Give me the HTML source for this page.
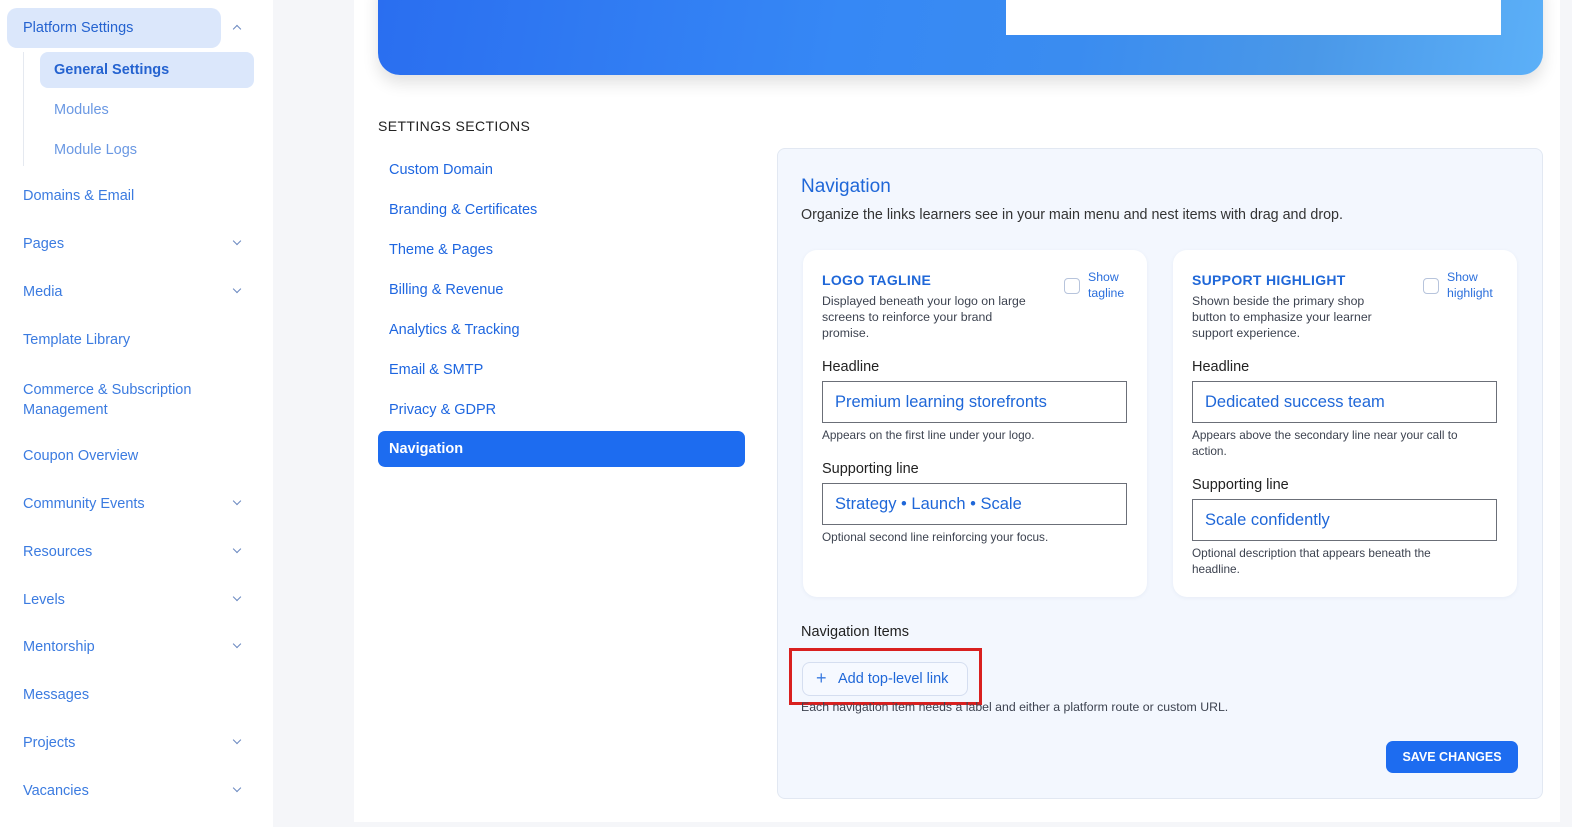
<!DOCTYPE html>
<html><head><meta charset="utf-8"><style>
*{box-sizing:border-box;margin:0;padding:0}
body{width:1572px;height:827px;overflow:hidden;background:#f5f6f9;font-family:"Liberation Sans",sans-serif;position:relative}
.a{position:absolute;white-space:nowrap}
.side{position:absolute;left:0;top:0;width:273px;height:827px;background:#fff}
.sl{position:absolute;left:23px;font-size:14.5px;color:#3b7be0}
.chev{position:absolute;left:234px;width:6px;height:6px;border-right:1.5px solid #6a88c0;border-bottom:1.5px solid #6a88c0;transform:rotate(45deg)}
.main{position:absolute;left:354px;top:0;width:1206px;height:822px;background:#fff}
.nav{position:absolute;left:389px;font-size:14.5px;color:#1e66e0}
.card{position:absolute;background:#fff;border-radius:14px;box-shadow:0 1px 4px rgba(30,60,120,.06)}
.t{font-size:14px;font-weight:bold;color:#1f67d8;letter-spacing:.3px}
.d{font-size:12.3px;color:#3d4350;line-height:16px}
.lbl{font-size:14.5px;color:#222}
.inp{position:absolute;border:1px solid #6b6f78;background:#fff;height:42px;font-size:16.5px;color:#1f67d8;padding:11px 12px}
.hint{font-size:11.8px;color:#3d4350;line-height:16px}
.cb{position:absolute;width:16px;height:16px;border:1px solid #b7c4dc;border-radius:4px;background:#fff}
.sh{font-size:12.3px;color:#2b6fdc;line-height:16px}
</style></head><body>
<div class="side">
<div class="a" style="left:7px;top:8px;width:214px;height:40px;background:#dbe7fb;border-radius:10px"></div>
<div class="sl" style="top:20px;color:#2563d0">Platform Settings</div>
<div class="chev" style="top:26px;transform:rotate(-135deg)"></div>
<div class="a" style="left:23px;top:52px;width:1px;height:114px;background:#e5e9f0"></div>
<div class="a" style="left:40px;top:52px;width:214px;height:36px;background:#dbe7fb;border-radius:8px"></div>
<div class="sl" style="left:54px;top:62px;color:#2563d0;font-weight:bold">General Settings</div>
<div class="sl" style="left:54px;top:102px;color:#6a98e3">Modules</div>
<div class="sl" style="left:54px;top:142px;color:#6a98e3">Module Logs</div>
<div class="sl" style="top:188px">Domains &amp; Email</div>
<div class="sl" style="top:236px">Pages</div><div class="chev" style="top:238px"></div>
<div class="sl" style="top:284px">Media</div><div class="chev" style="top:286px"></div>
<div class="sl" style="top:332px">Template Library</div>
<div class="sl" style="top:380px;line-height:20px">Commerce &amp; Subscription<br>Management</div>
<div class="sl" style="top:448px">Coupon Overview</div>
<div class="sl" style="top:496px">Community Events</div><div class="chev" style="top:498px"></div>
<div class="sl" style="top:544px">Resources</div><div class="chev" style="top:546px"></div>
<div class="sl" style="top:592px">Levels</div><div class="chev" style="top:594px"></div>
<div class="sl" style="top:639px">Mentorship</div><div class="chev" style="top:641px"></div>
<div class="sl" style="top:687px">Messages</div>
<div class="sl" style="top:735px">Projects</div><div class="chev" style="top:737px"></div>
<div class="sl" style="top:783px">Vacancies</div><div class="chev" style="top:785px"></div>
</div>
<div class="main"></div>
<div class="a" style="left:378px;top:-20px;width:1165px;height:95px;border-radius:0 0 22px 22px;background:linear-gradient(100deg,#2a6ef0 0%,#3688f5 40%,#3a8cf0 60%,#4a98e8 80%,#5cb0f8 100%);box-shadow:0 8px 16px rgba(0,0,0,.12)"></div>
<div class="a" style="left:1006px;top:0;width:495px;height:35px;background:#fff"></div>
<div class="a" style="left:378px;top:118px;font-size:14px;color:#222;letter-spacing:.4px">SETTINGS SECTIONS</div>
<div class="nav" style="top:162px">Custom Domain</div>
<div class="nav" style="top:202px">Branding &amp; Certificates</div>
<div class="nav" style="top:242px">Theme &amp; Pages</div>
<div class="nav" style="top:282px">Billing &amp; Revenue</div>
<div class="nav" style="top:322px">Analytics &amp; Tracking</div>
<div class="nav" style="top:362px">Email &amp; SMTP</div>
<div class="nav" style="top:402px">Privacy &amp; GDPR</div>
<div class="a" style="left:378px;top:431px;width:367px;height:36px;background:#1d6cf0;border-radius:7px"></div>
<div class="nav" style="top:441px;color:#fff;font-weight:bold">Navigation</div>
<div class="a" style="left:777px;top:148px;width:766px;height:651px;background:#f3f7fe;border:1px solid #e2e8f2;border-radius:8px"></div>
<div class="a" style="left:801px;top:176px;font-size:19px;color:#1f67d8">Navigation</div>
<div class="a" style="left:801px;top:207px;font-size:14.3px;color:#333">Organize the links learners see in your main menu and nest items with drag and drop.</div>
<div class="card" style="left:803px;top:250px;width:344px;height:347px"></div>
<div class="a t" style="left:822px;top:272px">LOGO TAGLINE</div>
<div class="a d" style="left:822px;top:293px">Displayed beneath your logo on large<br>screens to reinforce your brand<br>promise.</div>
<div class="cb" style="left:1064px;top:278px"></div>
<div class="a sh" style="left:1088px;top:269px">Show<br>tagline</div>
<div class="a lbl" style="left:822px;top:359px">Headline</div>
<div class="inp" style="left:822px;top:381px;width:305px">Premium learning storefronts</div>
<div class="a hint" style="left:822px;top:427px">Appears on the first line under your logo.</div>
<div class="a lbl" style="left:822px;top:461px">Supporting line</div>
<div class="inp" style="left:822px;top:483px;width:305px">Strategy • Launch • Scale</div>
<div class="a hint" style="left:822px;top:529px">Optional second line reinforcing your focus.</div>
<div class="card" style="left:1173px;top:250px;width:344px;height:347px"></div>
<div class="a t" style="left:1192px;top:272px">SUPPORT HIGHLIGHT</div>
<div class="a d" style="left:1192px;top:293px">Shown beside the primary shop<br>button to emphasize your learner<br>support experience.</div>
<div class="cb" style="left:1423px;top:278px"></div>
<div class="a sh" style="left:1447px;top:269px">Show<br>highlight</div>
<div class="a lbl" style="left:1192px;top:359px">Headline</div>
<div class="inp" style="left:1192px;top:381px;width:305px">Dedicated success team</div>
<div class="a hint" style="left:1192px;top:427px">Appears above the secondary line near your call to<br>action.</div>
<div class="a lbl" style="left:1192px;top:477px">Supporting line</div>
<div class="inp" style="left:1192px;top:499px;width:305px">Scale confidently</div>
<div class="a hint" style="left:1192px;top:545px">Optional description that appears beneath the<br>headline.</div>
<div class="a lbl" style="left:801px;top:624px">Navigation Items</div>
<div class="a" style="left:802px;top:662px;width:166px;height:34px;border:1px solid #d5def0;border-radius:8px;background:#f6f9ff"></div>
<div class="a" style="left:816px;top:668px;font-size:18px;color:#3b7be0">+</div>
<div class="a" style="left:838px;top:671px;font-size:14.5px;color:#1f67d8">Add top-level link</div>
<div class="a" style="left:789px;top:648px;width:193px;height:57px;border:3px solid #d9201f"></div>
<div class="a hint" style="left:801px;top:699px;font-size:12.3px">Each navigation item needs a label and either a platform route or custom URL.</div>
<div class="a" style="left:1386px;top:741px;width:132px;height:32px;background:#1d6cf0;border-radius:7px;color:#fff;font-size:12.5px;font-weight:bold;text-align:center;line-height:32px">SAVE CHANGES</div>
</body></html>
